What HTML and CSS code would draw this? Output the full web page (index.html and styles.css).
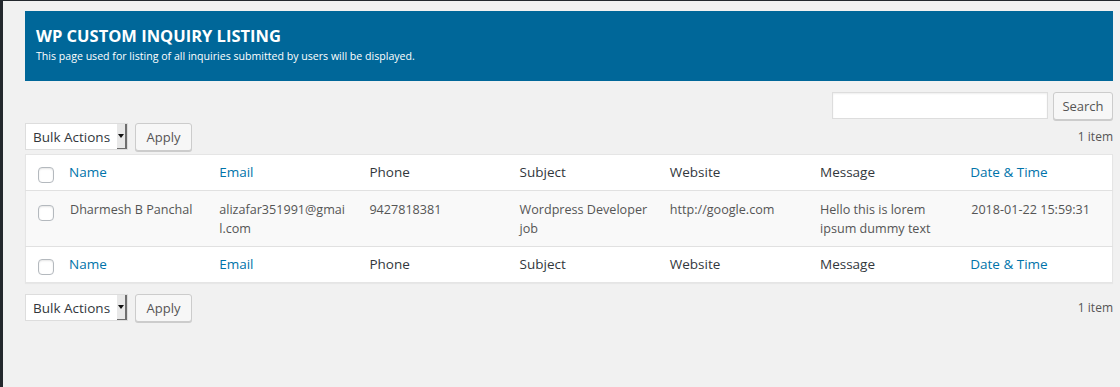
FILE: index.html
```html
<!DOCTYPE html>
<html lang="en">
<head>
    <meta charset="UTF-8">
    <title>WP Custom Inquiry Listing</title>
    <link rel="stylesheet" href="styles.css">
</head>
<body>
    <div class="admin">
        <div class="wrap">
            <div class="page-head">
                <h1>WP CUSTOM INQUIRY LISTING</h1>
                <p>This page used for listing of all inquiries submitted by users will be displayed.</p>
            </div>

            <form class="search-box">
                <input type="search" class="search-input">
                <button type="button" class="btn">Search</button>
            </form>

            <div class="tablenav">
                <div class="bulk">
                    <div class="select">
                        <span>Bulk Actions</span>
                        <span class="arrow"></span>
                    </div>
                    <button type="button" class="btn">Apply</button>
                </div>
                <span class="count">1 item</span>
            </div>

            <table class="list">
                <thead>
                    <tr>
                        <th class="check"><span class="box"></span></th>
                        <th><a href="#">Name</a></th>
                        <th><a href="#">Email</a></th>
                        <th>Phone</th>
                        <th>Subject</th>
                        <th>Website</th>
                        <th>Message</th>
                        <th><a href="#">Date &amp; Time</a></th>
                    </tr>
                </thead>
                <tbody>
                    <tr>
                        <td class="check"><span class="box"></span></td>
                        <td class="name">Dharmesh B Panchal</td>
                        <td class="email">alizafar351991@gmai<wbr>l.com</td>
                        <td>9427818381</td>
                        <td>Wordpress Developer job</td>
                        <td>http://google.com</td>
                        <td>Hello this is lorem ipsum dummy text</td>
                        <td class="date">2018-01-22 15:59:31</td>
                    </tr>
                </tbody>
                <tfoot>
                    <tr>
                        <th class="check"><span class="box"></span></th>
                        <th><a href="#">Name</a></th>
                        <th><a href="#">Email</a></th>
                        <th>Phone</th>
                        <th>Subject</th>
                        <th>Website</th>
                        <th>Message</th>
                        <th><a href="#">Date &amp; Time</a></th>
                    </tr>
                </tfoot>
            </table>

            <div class="tablenav bottom">
                <div class="bulk">
                    <div class="select">
                        <span>Bulk Actions</span>
                        <span class="arrow"></span>
                    </div>
                    <button type="button" class="btn">Apply</button>
                </div>
                <span class="count">1 item</span>
            </div>
        </div>
    </div>
</body>
</html>
```

FILE: styles.css
```css
body {
    margin: 0;
    padding: 0;
    background: #f1f1f1;
    font-family: "Open Sans", sans-serif;
    color: #444;
}

.admin {
    min-height: 386px;
    border-top: 1px solid #23282d;
    border-left: 3px solid #23282d;
}

.wrap {
    padding: 10px 7px 0 22px;
}

/* page header */
.page-head {
    background: #006799;
    color: #fff;
    height: 70px;
    box-sizing: border-box;
    padding: 15px 11px 0;
}
.page-head h1 {
    margin: 0;
    font-size: 16.5px;
    font-weight: 700;
    line-height: 20px;
}
.page-head p {
    margin: 3px 0 0;
    font-size: 10.6px;
    line-height: 14px;
}

/* search */
.search-box {
    display: flex;
    justify-content: flex-end;
    gap: 5px;
    margin-top: 11px;
}
.search-input {
    width: 216px;
    height: 27px;
    box-sizing: border-box;
    border: 1px solid #ddd;
    background: #fff;
    box-shadow: inset 0 1px 2px rgba(0, 0, 0, 0.07);
    margin: 0;
    outline: none;
}
.search-box .btn {
    width: 60px;
    padding: 0;
}

.btn {
    height: 28px;
    padding: 0 10px;
    font-family: "Open Sans", sans-serif;
    font-size: 13px;
    color: #555;
    background: #f7f7f7;
    border: 1px solid #ccc;
    border-radius: 3px;
    box-shadow: 0 1px 0 #ccc;
    cursor: pointer;
}

/* bulk actions bar */
.tablenav {
    display: flex;
    justify-content: space-between;
    align-items: flex-start;
    margin-top: 3px;
    height: 27px;
}
.tablenav.bottom {
    margin-top: 11px;
}
.bulk {
    display: flex;
    align-items: flex-start;
    gap: 7px;
}
.select {
    display: flex;
    align-items: center;
    justify-content: space-between;
    width: 103px;
    height: 27px;
    box-sizing: border-box;
    border: 1px solid #ddd;
    background: #fff;
    padding-left: 7px;
    font-size: 13.5px;
    color: #32373c;
}
.select .arrow {
    position: relative;
    width: 10px;
    height: 25px;
    background: #e8e8e8;
    border-right: 2px solid #6e6e6e;
    border-bottom: 1px solid #6e6e6e;
    box-sizing: border-box;
}
.select .arrow::after {
    content: "";
    position: absolute;
    left: 1px;
    top: 10px;
    border-left: 3px solid transparent;
    border-right: 3px solid transparent;
    border-top: 4px solid #111;
}
.tablenav .btn {
    width: 57px;
    padding: 0;
}
.count {
    font-size: 12px;
    color: #555;
    line-height: 27px;
}

/* list table */
.list {
    width: 100%;
    margin-top: 4px;
    border-collapse: collapse;
    table-layout: fixed;
    background: #fff;
    border: 1px solid #e5e5e5;
    box-shadow: 0 1px 1px rgba(0, 0, 0, 0.04);
}
.list thead tr,
.list tfoot tr {
    height: 36px;
}
.list tbody tr {
    height: 56px;
    background: #f9f9f9;
}
.list th {
    text-align: left;
    font-weight: 400;
    font-size: 13.5px;
    color: #32373c;
    padding: 0 8px 2px;
}
.list thead th {
    border-bottom: 1px solid #e1e1e1;
}
.list tfoot th {
    border-top: 1px solid #e1e1e1;
}
.list a {
    color: #0073aa;
    text-decoration: none;
}
.list th.check,
.list td.check {
    width: 23px;
    padding: 0 0 0 12px;
}
.list th.check {
    padding-top: 4px;
}
.list td.check {
    padding-top: 14px;
}
.list td {
    vertical-align: top;
    font-size: 12.6px;
    line-height: 19px;
    color: #555;
    padding: 9px 8px 0;
}
.list td.name,
.list td.date {
    padding-left: 9px;
}

.box {
    display: block;
    width: 14px;
    height: 14px;
    border: 1px solid #b4b9be;
    border-radius: 4px;
    background: #fff;
    box-shadow: inset 0 1px 2px rgba(0, 0, 0, 0.1);
}
```
